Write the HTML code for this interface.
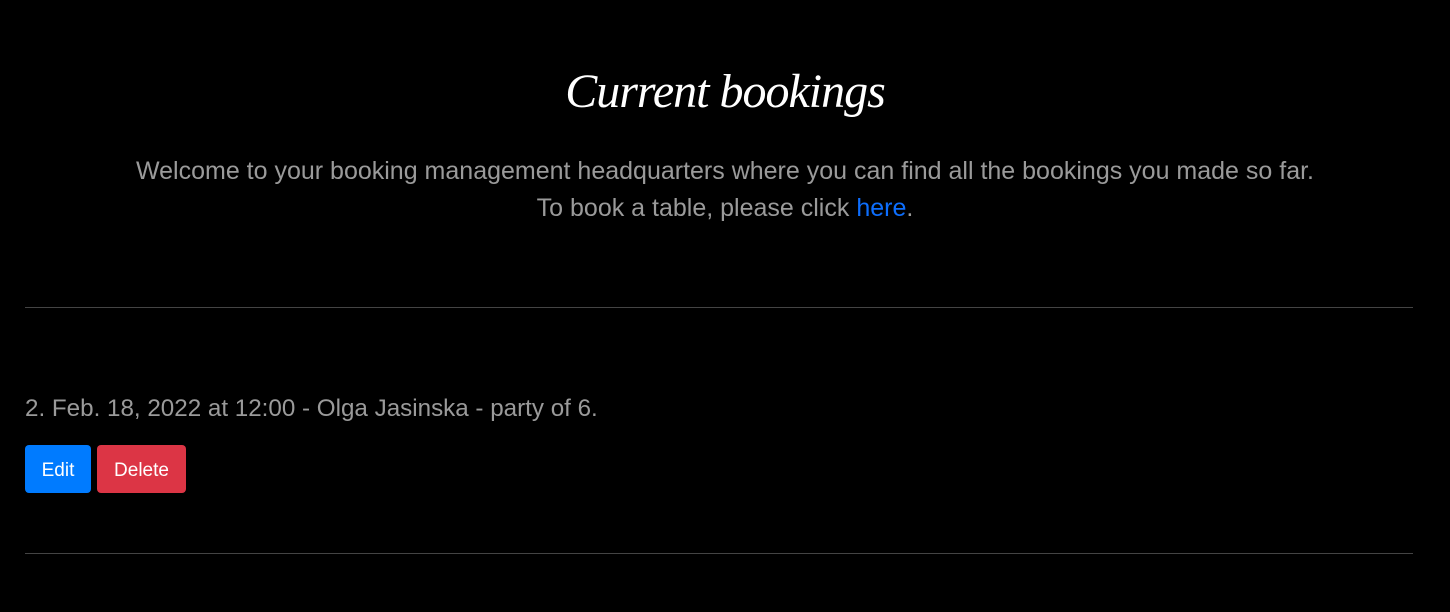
<!DOCTYPE html>
<html><head><style>
body{margin:0;background:#000;width:1450px;height:612px;overflow:hidden;font-family:"Liberation Sans",sans-serif;}
h1{position:absolute;top:62px;left:0;width:1450px;text-align:center;margin:0;font-family:"Liberation Serif",serif;font-style:italic;font-weight:normal;color:#fff;font-size:48px;line-height:60px;letter-spacing:-1px;}
.p{position:absolute;left:0;width:1450px;text-align:center;color:#9a9a9a;font-size:25px;}
a{color:#0d6efd;text-decoration:none}
hr{position:absolute;left:25px;width:1388px;margin:0;border:0;border-top:1px solid #444;}
.b{position:absolute;top:445px;height:48px;border-radius:4px;color:#fff;font-size:19px;line-height:52px;text-align:center;}
</style></head><body>
<h1>Current bookings</h1>
<div class="p" style="top:157px">Welcome to your booking management headquarters where you can find all the bookings you made so far.</div>
<div class="p" style="top:194px">To book a table, please click <a>here</a>.</div>
<hr style="top:307px">
<div style="position:absolute;left:25px;top:395px;color:#9a9a9a;font-size:24.2px">2. Feb. 18, 2022 at 12:00 - Olga Jasinska - party of 6.</div>
<div class="b" style="left:25px;width:66px;background:#007bff">Edit</div>
<div class="b" style="left:97px;width:89px;background:#dc3545">Delete</div>
<hr style="top:553px">
</body></html>
